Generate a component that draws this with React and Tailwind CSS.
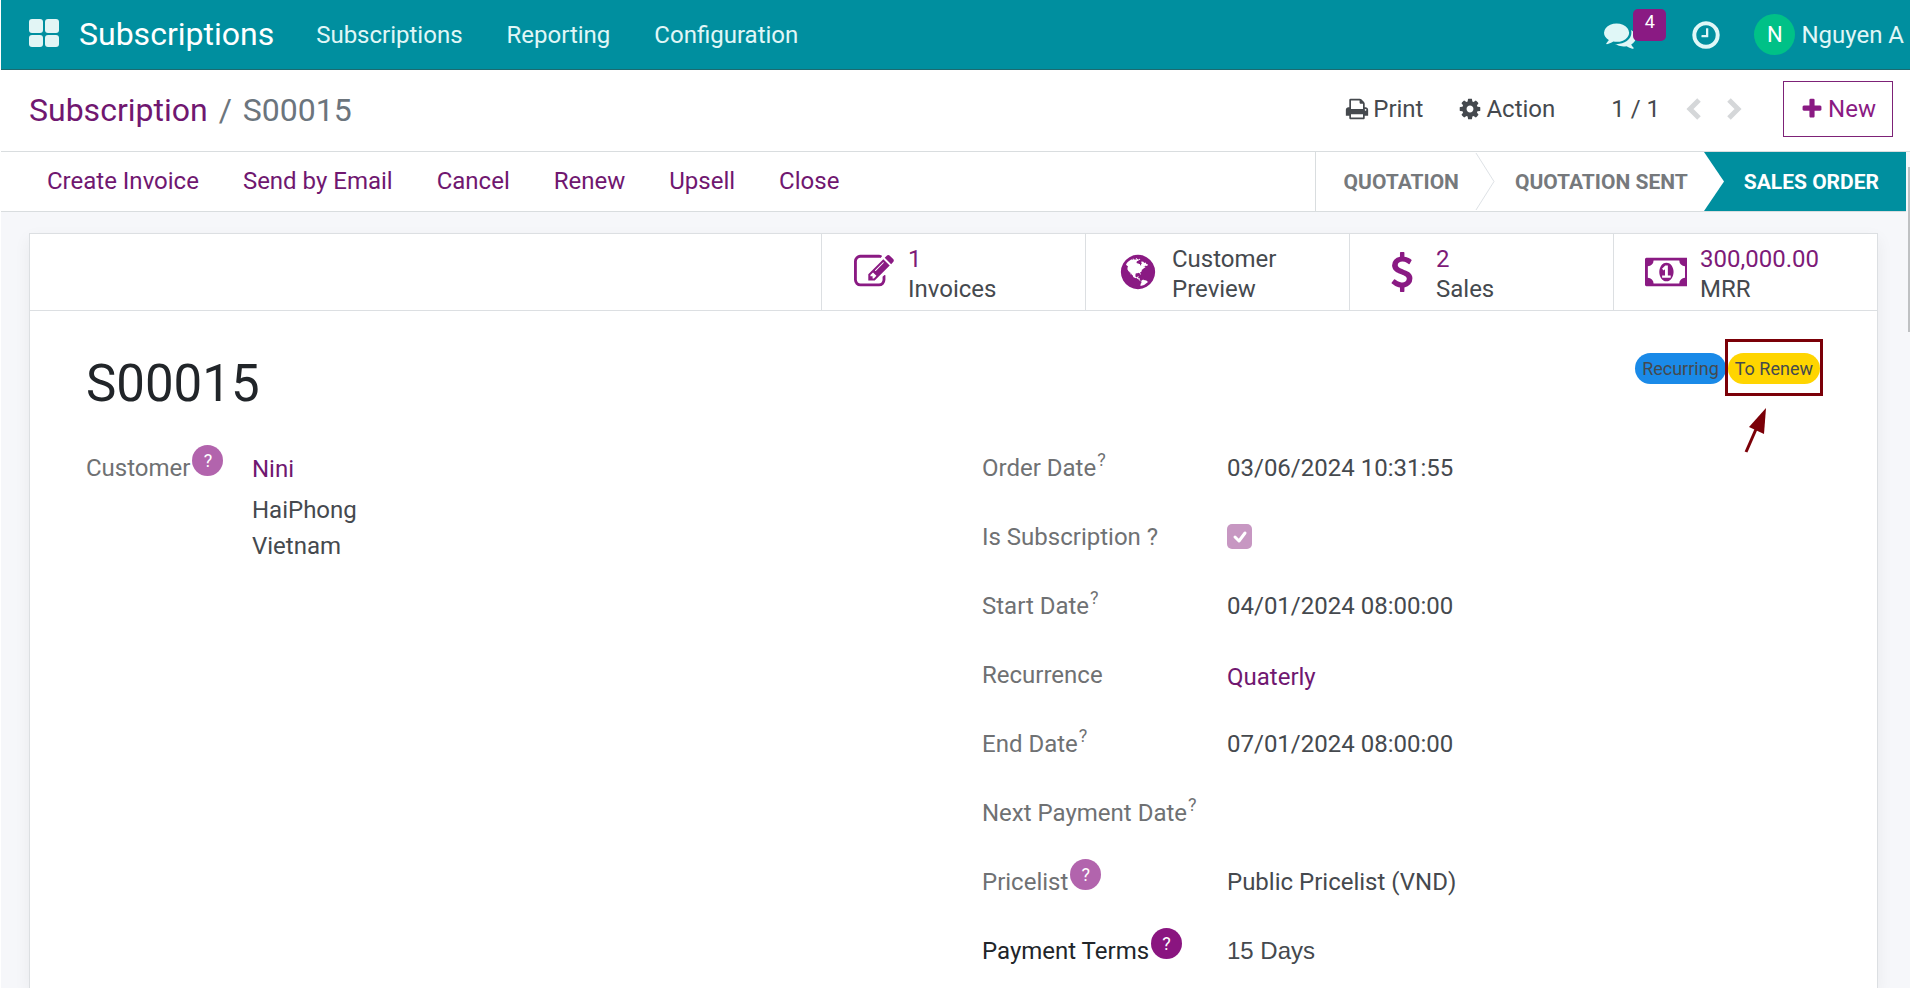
import { useState } from 'react'

const icons = {
  comments: 'M1408 768q0 139-94 257t-256.5 186.5-353.5 68.5q-86 0-176-16-124 88-278 128-36 9-86 16h-3q-11 0-20.5-8t-11.5-21q-1-3-1-6.5t.5-6.5 2-6l2.5-5 3.5-5.5 4-5 4.5-5 4-4.5q5-6 23-25t26-29.5 22.5-29 25-38.5 20.5-44q-124-72-195-177t-71-224q0-139 94-257t256.5-186.5 353.5-68.5 353.5 68.5 256.5 186.5 94 257zm384 256q0 120-71 224.5t-195 176.5q10 24 20.5 44t25 38.5 22.5 29 26 29.5 23 25q1 1 4 4.5t4.5 5 4 5 3.5 5.5l2.5 5 2 6 .5 6.5-1 6.5q-3 14-13 22t-22 7q-50-7-86-16-154-40-278-128-90 16-176 16-271 0-472-132 58 4 88 4 161 0 309-45t264-129q125-92 192-212t67-254q0-77-23-152 129 71 204 178t75 230z',
  clock: 'M1024 544v448q0 14-9 23t-23 9h-320q-14 0-23-9t-9-23v-64q0-14 9-23t23-9h224v-352q0-14 9-23t23-9h64q14 0 23 9t9 23zm416 352q0-148-73-273t-198-198-273-73-273 73-198 198-73 273 73 273 198 198 273 73 273-73 198-198 73-273zm224 0q0 209-103 385.5t-279.5 279.5-385.5 103-385.5-103-279.5-279.5-103-385.5 103-385.5 279.5-279.5 385.5-103 385.5 103 279.5 279.5 103 385.5z',
  print: 'M448 1536h896v-256h-896v256zm0-640h896v-384h-160q-40 0-68-28t-28-68v-160h-640v640zm1152 64q0-26-19-45t-45-19-45 19-19 45 19 45 45 19 45-19 19-45zm128 0v416q0 13-9.5 22.5t-22.5 9.5h-224v160q0 40-28 68t-68 28h-960q-40 0-68-28t-28-68v-160h-224q-13 0-22.5-9.5t-9.5-22.5v-416q0-79 56.5-135.5t135.5-56.5h64v-544q0-40 28-68t68-28h672q40 0 88 20t76 48l152 152q28 28 48 76t20 88v256h64q79 0 135.5 56.5t56.5 135.5z',
  cog: 'M1152 896q0-106-75-181t-181-75-181 75-75 181 75 181 181 75 181-75 75-181zm512-109v222q0 12-8 23t-20 13l-185 28q-19 54-39 91 35 50 107 138 10 12 10 25t-9 23q-27 37-99 108t-94 71q-12 0-26-9l-138-108q-44 23-91 38-16 136-29 186-7 28-36 28h-222q-14 0-24.5-8.5t-11.5-21.5l-28-184q-49-16-90-37l-141 107q-10 9-25 9-14 0-25-11-126-114-165-168-7-10-7-23 0-12 8-23 15-21 51-66.5t54-70.5q-27-50-41-99l-183-27q-13-2-21-12.5t-8-23.5v-222q0-12 8-23t19-13l186-28q14-46 39-92-40-57-107-138-10-12-10-24 0-10 9-23 26-36 98.5-107.5t94.5-71.5q13 0 26 10l138 107q44-23 91-38 16-136 29-186 7-28 36-28h222q14 0 24.5 8.5t11.5 21.5l28 184q49 16 90 37l142-107q9-9 24-9 13 0 25 10 129 119 165 170 7 8 7 22 0 12-8 23-15 21-51 66.5t-54 70.5q26 50 41 98l183 28q13 2 21 12.5t8 23.5z',
  plus: 'M1600 736v192q0 40-28 68t-68 28h-416v416q0 40-28 68t-68 28h-192q-40 0-68-28t-28-68v-416h-416q-40 0-68-28t-28-68v-192q0-40 28-68t68-28h416v-416q0-40 28-68t68-28h192q40 0 68 28t28 68v416h416q40 0 68 28t28 68z',
  edit: 'M888 1184l116-116-152-152-116 116v56h96v96h56zm440-720q-16-16-33 1l-350 350q-17 17-1 33t33-1l350-350q17-17 1-33zm80 594v190q0 119-84.5 203.5t-203.5 84.5h-832q-119 0-203.5-84.5t-84.5-203.5v-832q0-119 84.5-203.5t203.5-84.5h832q63 0 117 25 15 7 18 23 3 17-9 29l-49 49q-14 14-32 8-23-6-45-6h-832q-66 0-113 47t-47 113v832q0 66 47 113t113 47h832q66 0 113-47t47-113v-126q0-13 9-22l64-64q15-15 35-7t20 29zm-96-738l288 288-672 672h-288v-288zm444 132l-92 92-288-288 92-92q28-28 68-28t68 28l152 152q28 28 28 68t-28 68z',
  globe: 'M896 128q209 0 385.5 103t279.5 279.5 103 385.5-103 385.5-279.5 279.5-385.5 103-385.5-103-279.5-279.5-103-385.5 103-385.5 279.5-279.5 385.5-103zm274 521q-2 1-9.5 9.5t-13.5 9.5q2 0 4.5-5t5-11 3.5-7q6-7 22-15 14-6 52-12 34-8 51 11-2-2 9.5-13t14.5-12q3-2 15-4.5t15-7.5l2-22q-12 1-17.5-7t-6.5-21q0 2-6 8 0-7-4.5-8t-11.5 1-9 1q-10-3-15-7.5t-8-16.5-4-15q-2-5-9.5-11t-9.5-10q-1-2-2.5-5.5t-3-6.5-4-5.5-5.5-2.5-7 5-7.5 10-4.5 5q-3-2-6-1.5t-4.5 1-4.5 3-5 3.5q-3 2-8.5 3t-8.5 2q15-5-1-11-10-4-16-3 9-4 7.5-12t-8.5-14h5q-1-4-8.5-8.5t-17.5-8.5-13-6q-8-5-34-9.5t-33-.5q-5 6-4.5 10.5t4 14 3.5 12.5q1 6-5.5 13t-6.5 12q0 7 14 15.5t10 21.5q-3 8-16 16t-16 12q-5 8-1.5 18.5t10.5 16.5q2 2 1.5 4t-3.5 4.5-5.5 4-6.5 3.5l-3 2q-11 5-20.5-6t-13.5-26q-7-25-16-30-23-8-29 1-5-13-41-26-25-9-58-4 6-1 0-15-7-15-19-12 3-6 4-17.5t1-13.5q3-13 12-23 1-1 7-8.5t9.5-13.5.5-6q35 4 50-11 5-5 11.5-17t10.5-17q9-6 14-5.5t14.5 5.5 14.5 5q14 1 15.5-11t-7.5-20q12 1 3-17-4-7-8-9-12-4-27 5-8 4 2 8-1-1-9.5 10.5t-16.5 17.5-16-5q-1-1-5.5-13.5t-9.5-13.5q-8 0-16 15 3-8-11-15t-24-8q19-12-8-27-7-4-20.5-5t-19.5 4q-5 7-5.5 11.5t5 8 10.5 5.5 11.5 4 8.5 3q14 10 8 14-2 1-8.5 3.5t-11.5 4.5-6 4q-3 4 0 14t-2 14q-5-5-9-17.5t-7-16.5q7 9-25 6l-10-1q-4 0-16 2t-20.5 1-13.5-8q-4-8 0-20 1-4 4-2-4-3-11-9.5t-10-8.5q-46 15-94 41 6 1 12-1 5-2 13-6.5t10-5.5q34-14 42-7l5-5q14 16 20 25-7-4-30-1-20 6-22 12 7 12 5 18-4-3-11.5-10t-14.5-11-15-5q-16 0-22 1-146 80-235 222 7 7 12 8 4 1 5 9t2.5 11 11.5-3q9 8 3 19 1-1 44 27 19 17 21 21 3 11-10 18-1-2-9-9t-9-4q-3 5 .5 18.5t10.5 12.5q-7 0-9.5 16t-2.5 35.5-1 23.5l2 1q-3 12 5.5 34.5t21.5 19.5q-13 3 20 43 6 8 8 9 3 2 12 7.5t15 10 10 10.5q4 5 10 22.5t14 23.5q-2 6 9.5 20t10.5 23q-1 0-2.5 1t-2.5 1q3 7 15.5 14t15.5 13q1 3 2 10t3 11 8 2q2-20-24-62-15-25-17-29-3-5-5.5-15.5t-4.5-14.5q2 0 6 1.5t8.5 3.5 7.5 4 2 3q-3 7 2 17.5t12 18.5 17 19 12 13q6 6 14 19.5t0 13.5q9 0 20 10t17 20q5 8 8 26t5 24q2 7 8.5 13.5t12.5 9.5l16 8 13 7q5 2 18.5 10.5t21.5 11.5q10 4 16 4t14.5-2.5 13.5-3.5q15-2 29 15t21 21q36 19 55 11-2 1 .5 7.5t8 15.5 9 14.5 5.5 8.5q5 6 18 15t18 15q6-4 7-9-3 8 7 20t18 10q14-3 14-32-31 15-49-18 0-1-2.5-5.5t-4-8.5-2.5-8.5 0-7.5 5-3q9 0 10-3.5t-2-12.5-4-13q-1-8-11-20t-12-15q-5 9-16 8t-16-9q0 1-1.5 5.5t-1.5 6.5q-13 0-15-1 1-3 2.5-17.5t3.5-22.5q1-4 5.5-12t7.5-14.5 4-12.5-4.5-9.5-17.5-2.5q-19 1-26 20-1 3-3 10.5t-5 11.5-9 7q-7 3-24 2t-24-5q-13-8-22.5-29t-9.5-37q0-10 2.5-26.5t3-25-5.5-24.5q3-2 9-9.5t10-10.5q2-1 4.5-1.5t4.5 0 4-1.5 3-6q-1-1-4-3-3-3-4-3 7 3 28.5-1.5t27.5 1.5q15 11 22-2 0-1-2.5-9.5t-.5-13.5q5 27 29 9 3 3 15.5 5t17.5 5q3 2 7 5.5t5.5 4.5 5-.5 8.5-6.5q10 14 12 24 11 40 19 44 7 3 11 2t4.5-9.5 0-14-1.5-12.5l-1-8v-18l-1-8q-15-3-18.5-12t1.5-18.5 15-18.5q1-1 8-3.5t15.5-6.5 12.5-8q21-19 15-35 7 0 11-9-1 0-5-3t-7.5-5-4.5-2q9-5 2-16 5-3 7.5-11t7.5-10q9 12 21 2 8-8 1-16 5-7 20.5-10.5t18.5-9.5q7 2 8-2t1-12 3-12q4-5 15-9t13-5l17-11q3-4 0-4 18 2 31-11 10-11-6-20 3-6-3-9.5t-15-5.5q3-1 11.5-.5t10.5-1.5q15-10-7-16-17-5-43 12zm-163 877q206-36 351-189-3-3-12.5-4.5t-12.5-3.5q-18-7-24-8 1-7-2.5-13t-8-9-12.5-8-11-7q-2-2-7-6t-7-5.5-7.5-4.5-8.5-2-10 1l-3 1q-3 1-5.5 2.5t-5.5 3-4 3 0 2.5q-21-17-36-22-5-1-11-5.5t-10.5-7-10-1.5-11.5 7q-5 5-6 15t-2 13q-7-5 0-17.5t2-18.5q-3-6-10.5-4.5t-12 4.5-11.5 8.5-9 6.5-8.5 5.5-8.5 7.5q-3 4-6 12t-5 11q-2-4-11.5-6.5t-9.5-5.5q2 10 4 35t5 38q7 31-12 48-27 25-29 40-4 22 12 26 0 7-8 20.5t-7 21.5q0 6 2 16z',
  usd: 'M1362 1185q0 153-99.5 263.5t-258.5 136.5v175q0 14-9 23t-23 9h-135q-13 0-22.5-9.5t-9.5-22.5v-175q-66-9-127.5-31t-101.5-44.5-74-48-46.5-37.5-17.5-18q-17-21-2-41l103-135q7-10 23-12 15-2 24 9l2 2q113 99 243 125 37 8 74 8 81 0 142.5-43t61.5-122q0-28-15-53t-33.5-42-58.5-37.5-66-32-80-32.5q-39-16-61.5-25t-61.5-26.5-62.5-31-56.5-35.5-53.5-42.5-43.5-49-35.5-58-21-66.5-8.5-78q0-138 98-242t255-134v-180q0-13 9.5-22.5t22.5-9.5h135q14 0 23 9t9 23v176q57 6 110.5 23t87 33.5 63.5 37.5 39 29 15 14q17 18 5 38l-81 146q-8 15-23 16-14 3-27-7-3-3-14.5-12t-39-26.5-58.5-32-74.5-26-85.5-11.5q-95 0-155 43t-60 111q0 26 8.5 48t29.5 41.5 39.5 33 56 31 60.5 27 70 27.5q53 20 81 31.5t76 35 75.5 42.5 62 50 53 63.5 31.5 76.5 13 94z',
  money: 'M768 1152h384v-96h-128v-448h-114l-148 137 77 80q42-37 55-57h2v288h-128v96zm512-256q0 70-21 142t-59.5 134-101.5 101-138 39-138-39-101.5-101-59.5-134-21-142 21-142 59.5-134 101.5-101 138-39 138 39 101.5 101 59.5 134 21 142zm512 256v-512q-106 0-181-75t-75-181h-1152q0 106-75 181t-181 75v512q106 0 181 75t75 181h1152q0-106 75-181t181-75zm128-832v1152q0 26-19 45t-45 19h-1792q-26 0-45-19t-19-45v-1152q0-26 19-45t45-19h1792q26 0 45 19t19 45z',
}

const actions = ['Create Invoice', 'Send by Email', 'Cancel', 'Renew', 'Upsell', 'Close']

const stats = [
  { icon: 'edit', value: '1', label: 'Invoices' },
  { icon: 'globe', value: null, label: 'Customer Preview' },
  { icon: 'usd', value: '2', label: 'Sales' },
  { icon: 'money', value: '300,000.00', label: 'MRR' },
]

function Icon({ name, className }) {
  return (
    <svg viewBox={name === 'money' ? '0 0 1920 1792' : '0 0 1792 1792'} fill="currentColor" className={className} aria-hidden="true">
      <path d={icons[name]} />
    </svg>
  )
}

function Chevron({ d }) {
  return (
    <svg viewBox="0 0 16 22" className="h-[22px] w-4" fill="none" stroke="currentColor" strokeWidth="5" aria-hidden="true">
      <path d={d} />
    </svg>
  )
}

// Round help marker used on fields that depend on the company
function Help({ dark }) {
  return (
    <span className={`mb-[14px] ml-[2px] flex size-[31px] items-center justify-center rounded-full text-lg leading-none text-white ${dark ? 'bg-[#8a1580]' : 'bg-[#b264ad]'}`}>
      ?
    </span>
  )
}

function Field({ label, htmlFor, help, tip, strong, children }) {
  return (
    <div className="flex h-[69px] items-center">
      <label htmlFor={htmlFor} className={`flex h-11 w-[245px] shrink-0 items-center ${strong ? 'text-[#212529]' : 'text-[#6f7173]'}`}>
        {label}
        {tip && <span className="mb-4 ml-px text-lg leading-none">?</span>}
        {help && <Help dark={strong} />}
      </label>
      {children}
    </div>
  )
}

function Navbar() {
  return (
    <nav className="flex h-[70px] shrink-0 items-center border-b border-[#1c6a70] bg-[#008f9f] pr-[6px] pl-7 text-[#e0f7f7]">
      <button aria-label="Apps" className="mb-1 grid grid-cols-2 gap-[2px]">
        <span className="size-[14px] rounded-[3px] bg-[#e2f5f5]" />
        <span className="size-[14px] rounded-[3px] bg-[#e2f5f5]" />
        <span className="h-3 w-[14px] rounded-[3px] bg-[#e2f5f5]" />
        <span className="h-3 w-[14px] rounded-[3px] bg-[#e2f5f5]" />
      </button>
      <a href="#" className="ml-5 text-[32px] text-white">Subscriptions</a>
      <div className="ml-[42px] flex gap-11">
        <a href="#">Subscriptions</a>
        <a href="#">Reporting</a>
        <a href="#">Configuration</a>
      </div>
      <div className="ml-auto flex items-center">
        <button aria-label="Messages" className="relative mr-[54px]">
          <Icon name="comments" className="size-8" />
          <span className="absolute -top-[10px] left-[29px] flex h-8 w-[33px] justify-center rounded-[5px] bg-[#8a1a83] pt-px text-lg leading-6 text-white">4</span>
        </button>
        <button aria-label="Activities" className="mr-8">
          <Icon name="clock" className="size-8" />
        </button>
        <button className="flex items-center gap-[6px]">
          <span className="flex size-[41px] items-center justify-center rounded-full bg-[#00c187] text-[22px] text-white">N</span>
          Nguyen A
        </button>
      </div>
    </nav>
  )
}

function ControlPanel() {
  return (
    <div className="flex h-[82px] shrink-0 items-center border-b border-[#d9dddf] bg-white pr-[17px] pl-7">
      <div className="flex gap-[11px] text-[32px] text-[#6c757d]">
        <a href="#" className="text-[#701770]">Subscription</a>
        <span>/</span>
        <span>S00015</span>
      </div>
      <div className="ml-auto flex items-center pb-[3px] text-[#45494e]">
        <button className="flex items-center gap-1">
          <Icon name="print" className="size-6" />
          Print
        </button>
        <button className="ml-[35px] flex items-center gap-1">
          <Icon name="cog" className="size-6" />
          Action
        </button>
        <span className="ml-14">1 / 1</span>
        <button aria-label="Previous" className="ml-[26px] text-[#d5d7d9]">
          <Chevron d="M13 2 4 11l9 9" />
        </button>
        <button aria-label="Next" className="ml-6 text-[#d5d7d9]">
          <Chevron d="m3 2 9 9-9 9" />
        </button>
        <button className="ml-[41px] flex h-14 items-center gap-1 border border-[#7d2277] px-4 text-[#8a1a83]">
          <Icon name="plus" className="size-6" />
          New
        </button>
      </div>
    </div>
  )
}

function StatusBar() {
  return (
    <div className="mr-1 flex h-[60px] shrink-0 justify-between border-b border-[#d9dddf] bg-white pl-[46px]">
      <div className="flex gap-11 pb-[2px] text-[#701770]">
        {actions.map((a) => (
          <button key={a}>{a}</button>
        ))}
      </div>
      <div className="flex border-l border-[#d9dddf] text-[21px] font-bold text-[#76797c]">
        <button className="pr-4 pl-7">QUOTATION</button>
        <svg viewBox="0 0 20 59" className="h-full w-5" fill="none" stroke="#dee2e6" aria-hidden="true">
          <path d="M1 1 19 29.5 1 58" />
        </svg>
        <button className="pr-4 pl-5">QUOTATION SENT</button>
        <svg viewBox="0 0 20 59" className="h-full w-5 bg-[#008f9f]" preserveAspectRatio="none" aria-hidden="true">
          <path d="M0 0 20 29.5 0 59z" fill="#fff" />
        </svg>
        <button className="bg-[#008f9f] pr-[27px] pl-5 text-white">SALES ORDER</button>
      </div>
    </div>
  )
}

function StatButton({ icon, value, label }) {
  return (
    <button className="flex w-[264px] items-center border-l border-[#dcdfe2] pl-[18px] text-left leading-[30px]">
      <span className="flex w-[68px] shrink-0 justify-center text-[#8a1a83]">
        <Icon name={icon} className="h-10" />
      </span>
      <span className={value ? 'pt-[3px]' : 'w-[120px] pt-[3px]'}>
        {value && <span className="block text-[#7d1a78]">{value}</span>}
        {label}
      </span>
    </button>
  )
}

export default function App() {
  const [terms, setTerms] = useState('15 Days')

  return (
    <div className="relative flex h-screen flex-col overflow-hidden border-l border-white bg-[#f6f7fa] font-[Roboto,sans-serif] text-2xl text-[#45494e]">
      <Navbar />
      <ControlPanel />
      <StatusBar />

      <main className="mt-[21px] mr-8 ml-7 flex-1 border border-b-0 border-[#dcdfe2] bg-white shadow-[0_6px_16px_rgba(0,0,0,0.06)]">
        <div className="flex h-[77px] justify-end border-b border-[#dcdfe2]">
          {stats.map((s) => (
            <StatButton key={s.label} {...s} />
          ))}
        </div>

        <div className="pr-[55px] pl-14">
          <div className="flex items-start justify-between pt-[42px]">
            <h1 className="text-[51px] leading-[62px] text-[#212529]">S00015</h1>
            <div className="mr-[2px] flex gap-[2px] text-lg leading-[31px]">
              <span className="rounded-full bg-[#1a8ae8] px-[7px]">Recurring</span>
              <span className="relative rounded-full bg-[#ffd500] px-[7px]">
                To Renew
                {/* highlight frame with its arrow */}
                <span className="absolute -inset-x-[3px] -top-[14px] -bottom-3 border-3 border-[#7b0008]" />
                <svg viewBox="0 0 24 46" className="absolute top-[54px] left-4 h-[46px] w-6" aria-hidden="true">
                  <path d="M2 45 13 20" stroke="#7b0008" strokeWidth="3" />
                  <path d="M22 1 5 20l15 7z" fill="#7b0008" />
                </svg>
              </span>
            </div>
          </div>

          <div className="mt-[18px] grid grid-cols-2 gap-14">
            <div className="flex">
              <div className="flex h-[69px] w-[166px] shrink-0 items-center text-[#6f7173]">
                Customer
                <Help />
              </div>
              <div className="pt-[18px] leading-9">
                <a href="#" className="mb-[5px] block text-[#701770]">Nini</a>
                <div>HaiPhong</div>
                <div>Vietnam</div>
              </div>
            </div>

            <div>
              <Field label="Order Date" tip>03/06/2024 10:31:55</Field>
              <Field label="Is Subscription ?" htmlFor="is_subscription">
                <span className="relative flex">
                  <input
                    id="is_subscription"
                    type="checkbox"
                    checked
                    disabled
                    readOnly
                    className="size-[25px] appearance-none rounded-[5px] bg-[#c797c2]"
                  />
                  <svg viewBox="0 0 25 25" className="pointer-events-none absolute inset-0" fill="none" stroke="#fff" strokeWidth="3" strokeLinecap="round" strokeLinejoin="round" aria-hidden="true">
                    <path d="m8 13 4 4 6-8" />
                  </svg>
                </span>
              </Field>
              <Field label="Start Date" tip>04/01/2024 08:00:00</Field>
              <Field label="Recurrence">
                <a href="#" className="pt-1 text-[#701770]">Quaterly</a>
              </Field>
              <Field label="End Date" tip>07/01/2024 08:00:00</Field>
              <Field label="Next Payment Date" tip />
              <Field label="Pricelist" help>Public Pricelist (VND)</Field>
              <Field label="Payment Terms" htmlFor="payment_terms" help strong>
                <input
                  id="payment_terms"
                  value={terms}
                  onChange={(e) => setTerms(e.target.value)}
                  className="min-w-0 flex-1 bg-transparent font-['Liberation_Sans',sans-serif] outline-none"
                />
              </Field>
            </div>
          </div>
        </div>
      </main>

      {/* thin scrollbar thumb on the window edge */}
      <span className="absolute top-[167px] right-0 h-[165px] w-[2px] bg-[#bfc1c3]" />
    </div>
  )
}
